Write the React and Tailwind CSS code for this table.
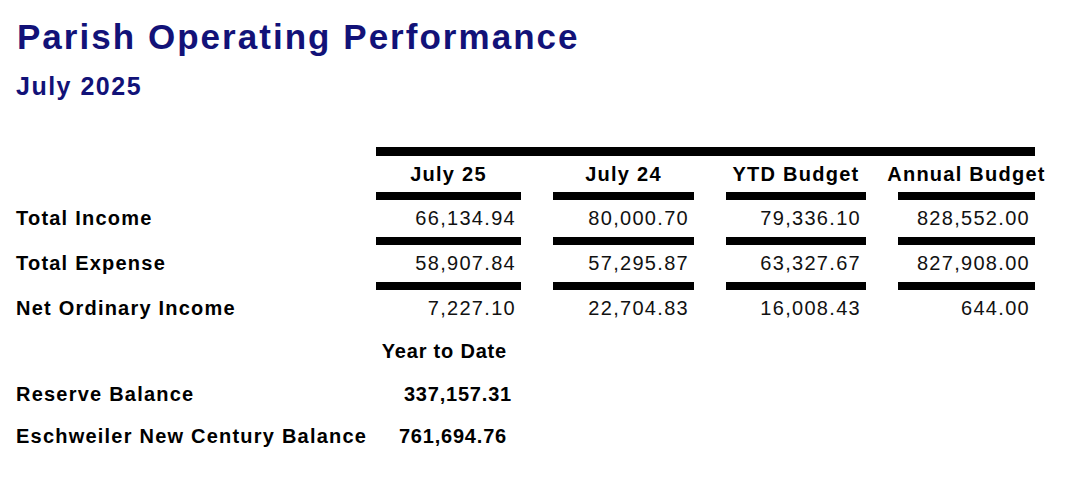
const cols = ["July 25", "July 24", "YTD Budget", "Annual Budget"];

const rows = [
  { label: "Total Income", values: ["66,134.94", "80,000.70", "79,336.10", "828,552.00"] },
  { label: "Total Expense", values: ["58,907.84", "57,295.87", "63,327.67", "827,908.00"] },
  { label: "Net Ordinary Income", values: ["7,227.10", "22,704.83", "16,008.43", "644.00"] },
];

const gridCols = "grid grid-cols-[145px_141px_140px_137px] gap-x-[32px]";

function DataRow({ label, values }) {
  return (
    <div className="flex">
      <div className="w-[360px] shrink-0 pt-[14px] font-bold text-[20px] leading-[24px] tracking-[0.061em] whitespace-nowrap">
        {label}
      </div>
      <div className={gridCols}>
        {values.map((v, i) => (
          <div key={i} className="flex flex-col">
            <div className="h-[8px] bg-black" />
            <div className="mt-[6px] pr-[5px] text-right text-[20px] leading-[24px] tracking-[0.065em] text-[#111]">{v}</div>
          </div>
        ))}
      </div>
    </div>
  );
}

export default function App() {
  return (
    <div
      className="w-[1083px] h-[482px] bg-white pl-[16px] text-black tracking-[0.05em] overflow-hidden"
      style={{ fontFamily: "'Liberation Sans', Arial, sans-serif" }}
    >
      <h1 className="pt-[17px] pl-[1px] text-[35px] leading-[40px] font-bold text-[#121278] tracking-[0.058em] whitespace-nowrap">
        Parish Operating Performance
      </h1>
      <h2 className="mt-[14px] text-[25px] leading-[30px] font-bold text-[#121278] tracking-[0.06em]">July 2025</h2>

      <div className="mt-[46px] ml-[360px] w-[659px] h-[9px] bg-black" />

      <div className="flex mt-[6px]">
        <div className="w-[360px] shrink-0" />
        <div className={gridCols}>
          {cols.map((c) => (
            <div key={c} className="flex justify-center whitespace-nowrap font-bold text-[20px] leading-[24px] tracking-[0.063em]">
              {c}
            </div>
          ))}
        </div>
      </div>

      <div className="mt-[6px] flex flex-col gap-[7px]">
        {rows.map((r) => (
          <DataRow key={r.label} {...r} />
        ))}
      </div>

      <div className="flex mt-[19px]">
        <div className="w-[360px] shrink-0" />
        <div className="w-[145px] pr-[14px] text-right font-bold text-[20px] leading-[24px] whitespace-nowrap">
          Year to Date
        </div>
      </div>
      <div className="flex mt-[19px] font-bold text-[20px] leading-[24px]">
        <div className="w-[360px] shrink-0 whitespace-nowrap tracking-[0.061em]">Reserve Balance</div>
        <div className="w-[145px] pr-[9px] text-right">337,157.31</div>
      </div>
      <div className="flex mt-[18px] font-bold text-[20px] leading-[24px]">
        <div className="w-[360px] shrink-0 whitespace-nowrap tracking-[0.061em]">Eschweiler New Century Balance</div>
        <div className="w-[145px] pr-[14px] text-right">761,694.76</div>
      </div>
    </div>
  );
}
